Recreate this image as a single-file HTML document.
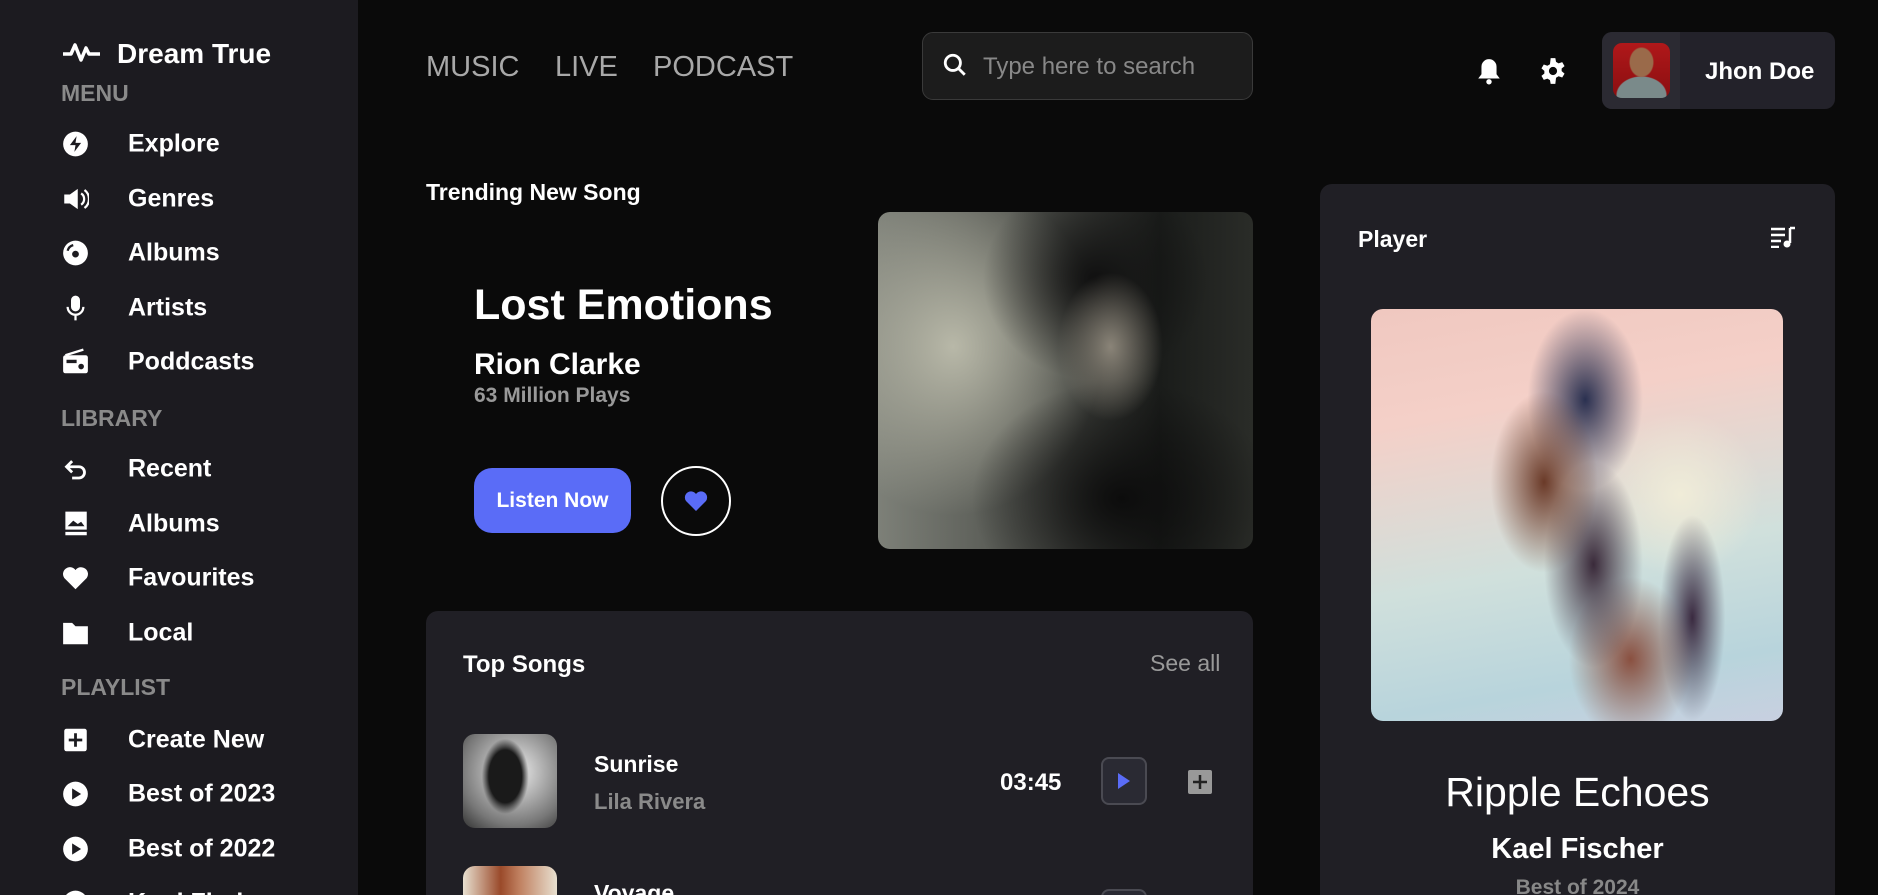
<!DOCTYPE html>
<html><head><meta charset="utf-8"><style>
*{margin:0;padding:0;box-sizing:border-box}
html,body{width:1878px;height:895px;overflow:hidden}
body{background:#0a0a0a;font-family:"Liberation Sans",sans-serif;color:#fff}
#w{position:relative;width:1878px;height:895px;overflow:hidden}
.a{position:absolute}
.side{left:0;top:0;width:358px;height:895px;background:#1c1b20}
.sec{left:61px;font-size:23px;font-weight:bold;color:#8a8a8a}
.it{left:128px;font-size:25px;font-weight:bold;transform:translateY(-50%)}
.ic{left:62px;width:27px;height:27px;transform:translateY(-50%)}
.nav{font-size:29px;color:#a8a8a8;top:51px}
.card{background:#201f25;border-radius:12px}
</style></head><body><div id="w">
<div class="a side"></div>
<svg class="a" style="left:62px;top:40px" width="40" height="24" viewBox="0 0 40 24"><path d="M1 14h8l4-9 6 15 5-12 3 6h11" stroke="#fff" stroke-width="3.5" fill="none" stroke-linejoin="round"/></svg>
<div class="a" style="left:117px;top:38px;font-size:28px;font-weight:bold">Dream True</div>
<div class="a sec" style="top:80px">MENU</div>
<div class="a sec" style="top:405px">LIBRARY</div>
<div class="a sec" style="top:674px">PLAYLIST</div>

<svg class="a ic" style="top:144px" viewBox="0 0 24 24"><circle cx="12" cy="12" r="11" fill="#fff"/><path d="M13 5l-6 8h5l-1 6 6-8h-5z" fill="#1c1b20"/></svg>
<div class="a it" style="top:144px">Explore</div>
<svg class="a ic" style="top:199px" viewBox="0 0 24 24"><path d="M2 8h5l7-5v18l-7-5H2z" fill="#fff"/><path d="M17 7a6 6 0 0 1 0 10M20 4a10 10 0 0 1 0 16" stroke="#fff" stroke-width="2" fill="none"/></svg>
<div class="a it" style="top:199px">Genres</div>
<svg class="a ic" style="top:253px" viewBox="0 0 24 24"><circle cx="12" cy="12" r="11" fill="#fff"/><circle cx="12" cy="13" r="3" fill="#1c1b20"/><path d="M5 10a7 7 0 0 1 5-5" stroke="#1c1b20" stroke-width="2" fill="none"/></svg>
<div class="a it" style="top:253px">Albums</div>
<svg class="a ic" style="top:308px" viewBox="0 0 24 24"><rect x="8" y="1" width="8" height="14" rx="4" fill="#fff"/><path d="M5 11a7 7 0 0 0 14 0M12 18v5" stroke="#fff" stroke-width="2" fill="none"/></svg>
<div class="a it" style="top:308px">Artists</div>
<svg class="a ic" style="top:362px" viewBox="0 0 24 24"><rect x="1" y="6" width="22" height="16" rx="2" fill="#fff"/><path d="M3 6l16-5" stroke="#fff" stroke-width="2"/><rect x="4" y="10" width="9" height="3" fill="#1c1b20"/><circle cx="17" cy="16" r="2.5" fill="#1c1b20"/></svg>
<div class="a it" style="top:362px">Poddcasts</div>
<svg class="a ic" style="top:469px" viewBox="0 0 24 24"><path d="M9 5L4 10l5 5M4 10h11a5 5 0 0 1 0 10H9" stroke="#fff" stroke-width="2.5" fill="none"/></svg>
<div class="a it" style="top:469px">Recent</div>
<svg class="a ic" style="top:524px" viewBox="0 0 24 24"><rect x="3" y="1" width="19" height="16" fill="#fff"/><path d="M5 14l5-5 4 3 3-2 3 4z" fill="#1c1b20"/><rect x="3" y="19" width="19" height="3" fill="#fff"/></svg>
<div class="a it" style="top:524px">Albums</div>
<svg class="a ic" style="top:578px" viewBox="0 0 24 24"><path d="M12 22L2 12a5.5 5.5 0 0 1 10-7 5.5 5.5 0 0 1 10 7z" fill="#fff"/></svg>
<div class="a it" style="top:578px">Favourites</div>
<svg class="a ic" style="top:633px" viewBox="0 0 24 24"><path d="M1 3h8l3 3h11v16H1z" fill="#fff"/></svg>
<div class="a it" style="top:633px">Local</div>
<svg class="a ic" style="top:740px" viewBox="0 0 24 24"><rect x="2" y="2" width="20" height="20" rx="2" fill="#fff"/><path d="M12 6v12M6 12h12" stroke="#1c1b20" stroke-width="2.5"/></svg>
<div class="a it" style="top:740px">Create New</div>
<svg class="a ic" style="top:794px" viewBox="0 0 24 24"><circle cx="12" cy="12" r="11" fill="#fff"/><path d="M9 7v10l8-5z" fill="#1c1b20"/></svg>
<div class="a it" style="top:794px">Best of 2023</div>
<svg class="a ic" style="top:849px" viewBox="0 0 24 24"><circle cx="12" cy="12" r="11" fill="#fff"/><path d="M9 7v10l8-5z" fill="#1c1b20"/></svg>
<div class="a it" style="top:849px">Best of 2022</div>
<svg class="a ic" style="top:903px" viewBox="0 0 24 24"><circle cx="12" cy="12" r="11" fill="#fff"/></svg>
<div class="a it" style="top:903px">Kool Finds</div>

<div class="a nav" style="left:426px">MUSIC</div>
<div class="a nav" style="left:555px">LIVE</div>
<div class="a nav" style="left:653px">PODCAST</div>
<div class="a" style="left:922px;top:32px;width:331px;height:68px;background:#1c1c1c;border:1px solid #3a3a3a;border-radius:11px"></div>
<svg class="a" style="left:942px;top:52px" width="26" height="26" viewBox="0 0 24 24"><circle cx="10" cy="10" r="7" stroke="#fff" stroke-width="2.6" fill="none"/><path d="M15 15l6 6" stroke="#fff" stroke-width="2.6"/></svg>
<div class="a" style="left:983px;top:53px;font-size:24px;color:#888">Type here to search</div>
<svg class="a" style="left:1476px;top:57px" width="26" height="28" viewBox="0 0 24 26"><path d="M12 2a7 7 0 0 0-7 7v7l-3 4h20l-3-4V9a7 7 0 0 0-7-7z" fill="#fff"/><circle cx="12" cy="23" r="2.5" fill="#fff"/></svg>
<svg class="a" style="left:1539px;top:57px" width="28" height="28" viewBox="0 0 24 24"><path d="M10 1h4l.6 3.2 2.2 1.3 3.1-1.1 2 3.4-2.5 2.1v2.2l2.5 2.1-2 3.4-3.1-1.1-2.2 1.3L14 23h-4l-.6-3.2-2.2-1.3-3.1 1.1-2-3.4 2.5-2.1v-2.2L2.1 9.8l2-3.4 3.1 1.1 2.2-1.3z" fill="#fff"/><circle cx="12" cy="12" r="3.5" fill="#0a0a0a"/></svg>
<div class="a" style="left:1602px;top:32px;width:233px;height:77px;background:#23222a;border-radius:10px;overflow:hidden"><div style="width:78px;height:77px;background:#2b2a32"></div></div>
<div class="a" style="left:1613px;top:43px;width:57px;height:55px;border-radius:9px;background:radial-gradient(ellipse 22% 28% at 50% 35%,#9a6a4a 90%,transparent),radial-gradient(ellipse 45% 35% at 50% 95%,#7a8a8a 95%,transparent),linear-gradient(#b0181a,#8a0e10)"></div>
<div class="a" style="left:1705px;top:58px;font-size:24px;font-weight:bold">Jhon Doe</div>

<div class="a" style="left:426px;top:179px;font-size:23px;font-weight:bold">Trending New Song</div>
<div class="a" style="left:474px;top:281px;font-size:43px;font-weight:bold">Lost Emotions</div>
<div class="a" style="left:474px;top:348px;font-size:30px;font-weight:bold">Rion Clarke</div>
<div class="a" style="left:474px;top:384px;font-size:21px;font-weight:bold;color:#999">63 Million Plays</div>
<div class="a" style="left:474px;top:468px;width:157px;height:65px;background:#5a6cf7;border-radius:18px;font-size:21px;font-weight:bold;line-height:65px;text-align:center">Listen Now</div>
<div class="a" style="left:661px;top:466px;width:70px;height:70px;border:2.5px solid #fff;border-radius:50%"></div>
<svg class="a" style="left:684px;top:489px" width="24" height="24" viewBox="0 0 24 24"><path d="M12 22L2 12a5.5 5.5 0 0 1 10-7 5.5 5.5 0 0 1 10 7z" fill="#5a6cf7"/></svg>
<div class="a" style="left:878px;top:212px;width:375px;height:337px;border-radius:12px;background:radial-gradient(ellipse 14% 22% at 62% 40%,#8a8478,transparent),radial-gradient(ellipse 30% 30% at 58% 20%,#101010,transparent),radial-gradient(ellipse 40% 35% at 65% 85%,#0c0c0c,transparent),radial-gradient(ellipse 40% 50% at 20% 40%,#b8b8a8,transparent),linear-gradient(90deg,#7d8078,#4b4d48 45%,#1a1c1a 75%,#2a2c28)"></div>

<div class="a card" style="left:426px;top:611px;width:827px;height:300px"></div>
<div class="a" style="left:463px;top:651px;font-size:24px;font-weight:bold">Top Songs</div>
<div class="a" style="left:1150px;top:650px;font-size:23px;color:#999">See all</div>
<div class="a" style="left:463px;top:734px;width:94px;height:94px;border-radius:12px;background:radial-gradient(ellipse 25% 40% at 45% 45%,#1a1a1a 70%,transparent),radial-gradient(circle at 55% 40%,#f0f0f0,#777 70%,#333)"></div>
<div class="a" style="left:594px;top:751px;font-size:23px;font-weight:bold">Sunrise</div>
<div class="a" style="left:594px;top:789px;font-size:22px;font-weight:bold;color:#8a8a8a">Lila Rivera</div>
<div class="a" style="left:1000px;top:769px;font-size:24px;font-weight:bold">03:45</div>
<div class="a" style="left:1101px;top:757px;width:46px;height:48px;border:2.5px solid #4a4a52;border-radius:8px;background:#2a2a33"></div>
<svg class="a" style="left:1116px;top:771px" width="16" height="20"><path d="M2 2v16l12-8z" fill="#5a6cf7"/></svg>
<svg class="a" style="left:1188px;top:770px" width="24" height="24"><rect x="0" y="0" width="24" height="24" rx="2" fill="#999"/><path d="M12 5v14M5 12h14" stroke="#222" stroke-width="2.5"/></svg>
<div class="a" style="left:463px;top:866px;width:94px;height:60px;border-radius:12px;background:linear-gradient(90deg,#e8e0d0,#9a4a2a 40%,#c08060 60%,#e8e0d0)"></div>
<div class="a" style="left:594px;top:880px;font-size:23px;font-weight:bold">Voyage</div>
<div class="a" style="left:1101px;top:889px;width:46px;height:48px;border:2.5px solid #4a4a52;border-radius:8px;background:#2a2a33"></div>

<div class="a card" style="left:1320px;top:184px;width:515px;height:740px"></div>
<div class="a" style="left:1358px;top:226px;font-size:23px;font-weight:bold">Player</div>
<svg class="a" style="left:1770px;top:226px" width="26" height="22" viewBox="0 0 26 22"><path d="M1 3h14M1 9h14M1 15h10M1 21h8" stroke="#fff" stroke-width="2.5"/><path d="M20 2v15" stroke="#fff" stroke-width="2.5"/><path d="M20 2h5" stroke="#fff" stroke-width="2.5"/><circle cx="17" cy="18" r="3.5" fill="#fff"/></svg>
<div class="a" style="left:1371px;top:309px;width:412px;height:412px;border-radius:12px;background:radial-gradient(ellipse 13% 22% at 42% 42%,#6a3a28,transparent),radial-gradient(ellipse 12% 25% at 54% 62%,#3a2a3a,transparent),radial-gradient(ellipse 14% 22% at 52% 22%,#2a3050,transparent),radial-gradient(ellipse 15% 20% at 63% 85%,#8a5040,transparent),radial-gradient(ellipse 8% 25% at 78% 75%,#3a2a40,transparent),radial-gradient(ellipse 20% 20% at 75% 45%,#f0ecd8,transparent),linear-gradient(170deg,#f0c8c0,#f4d0c8 25%,#d0e0dc 60%,#b8d4dc 85%,#c8d0e0)"></div>
<div class="a" style="left:1320px;width:515px;top:769px;text-align:center;font-size:41px">Ripple Echoes</div>
<div class="a" style="left:1320px;width:515px;top:833px;text-align:center;font-size:29px;font-weight:bold">Kael Fischer</div>
<div class="a" style="left:1320px;width:515px;top:876px;text-align:center;font-size:21px;font-weight:bold;color:#888">Best of 2024</div>
</div></body></html>
